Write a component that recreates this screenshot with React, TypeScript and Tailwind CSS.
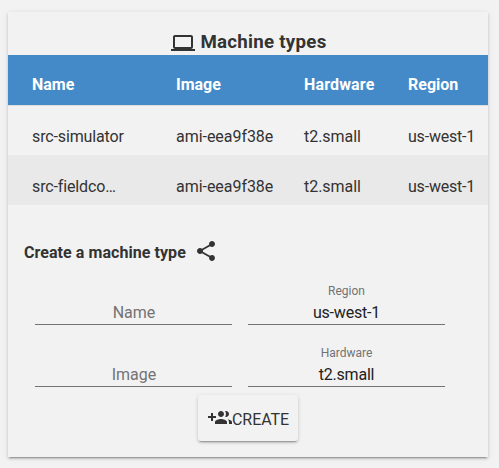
import type { ReactNode } from "react";

const ELEVATION =
  "shadow-[0_2px_2px_0_rgba(0,0,0,0.14),0_1px_5px_0_rgba(0,0,0,0.12),0_3px_1px_-2px_rgba(0,0,0,0.2)]";

const COLUMNS = "grid grid-cols-[144px_128px_104px_80px] pl-6 h-[50px] leading-6";

const machines = [
  { name: "src-simulator", image: "ami-eea9f38e", hardware: "t2.small", region: "us-west-1" },
  { name: "src-fieldco…", image: "ami-eea9f38e", hardware: "t2.small", region: "us-west-1" },
];

function Icon({ d }: { d: string }) {
  return (
    <svg viewBox="0 0 24 24" className="size-6 shrink-0 fill-[#333]" aria-hidden="true">
      <path d={d} />
    </svg>
  );
}

const LAPTOP =
  "M20 18c1.1 0 1.99-.9 1.99-2L22 6c0-1.1-.9-2-2-2H4c-1.1 0-2 .9-2 2v10c0 1.1.9 2 2 2H0v2h24v-2h-4zM4 6h16v10H4V6z";
const SHARE =
  "M18 16.08c-.76 0-1.44.3-1.96.77L8.91 12.7c.05-.23.09-.46.09-.7s-.04-.47-.09-.7l7.05-4.11c.54.5 1.25.81 2.04.81 1.66 0 3-1.34 3-3s-1.34-3-3-3-3 1.34-3 3c0 .24.04.47.09.7L8.04 9.81C7.5 9.31 6.79 9 6 9c-1.66 0-3 1.34-3 3s1.34 3 3 3c.79 0 1.5-.31 2.04-.81l7.12 4.16c-.05.21-.08.43-.08.65 0 1.61 1.31 2.92 2.92 2.92 1.61 0 2.92-1.31 2.92-2.92s-1.31-2.92-2.92-2.92z";
const GROUP_ADD =
  "M8 10H5V7H3v3H0v2h3v3h2v-3h3v-2zm10 1c1.66 0 2.99-1.34 2.99-3S19.66 5 18 5c-.32 0-.63.05-.91.14.57.81.9 1.79.9 2.86s-.34 2.04-.9 2.86c.28.09.59.14.91.14zm-5 0c1.66 0 2.99-1.34 2.99-3S14.66 5 13 5c-1.66 0-3 1.34-3 3s1.34 3 3 3zm6.62 2.16c.83.73 1.38 1.66 1.38 2.84v2h3v-2c0-1.54-2.37-2.49-4.38-2.84zM13 13c-2 0-6 1-6 3v2h12v-2c0-2-4-3-6-3z";

function Cell({ children, className = "" }: { children: ReactNode; className?: string }) {
  return <div className={`whitespace-nowrap ${className}`}>{children}</div>;
}

function Field({ label, value }: { label: string; value?: string }) {
  return (
    <div className="flex h-[62px] w-[197px] flex-col text-center">
      <div className="h-7 pt-[10px] text-xs leading-5 text-[#737373]">{value ? label : ""}</div>
      <div
        className={`h-[26px] border-b border-[#737373] pt-0.5 leading-6 ${value ? "tracking-[-0.2px] text-[#212121]" : "pl-px text-[#737373]"}`}
      >
        {value ?? label}
      </div>
    </div>
  );
}

export default function App() {
  return (
    <div className="h-[468px] bg-[#f2f2f2] px-2 pt-3 font-['Roboto',sans-serif] text-base text-[#333]">
      <main className={`h-[445px] w-[480px] bg-[#f2f2f2] ${ELEVATION}`}>
        <h1 className="flex h-[43px] items-start justify-center gap-[5px] pl-0.5 pt-[19px] text-[18.72px] font-bold leading-[22px] tracking-[0.25px]">
          <Icon d={LAPTOP} />
          <span>Machine types</span>
        </h1>
        <div className={`${COLUMNS} bg-[#448ac9] pt-[18px] font-bold text-white`}>
          <Cell>Name</Cell>
          <Cell>Image</Cell>
          <Cell className="tracking-[0.15px]">Hardware</Cell>
          <Cell>Region</Cell>
        </div>
        {machines.map((m, i) => (
          <div
            key={m.name}
            className={`${COLUMNS} pt-5 ${i % 2 ? "bg-[#e9e9e9]" : "shadow-[inset_0_1px_0_#dcdcdc]"}`}
          >
            <Cell className="tracking-[-0.13px]">{m.name}</Cell>
            <Cell className="tracking-[-0.04px]">{m.image}</Cell>
            <Cell className="tracking-[-0.05px]">{m.hardware}</Cell>
            <Cell className="tracking-[-0.2px]">{m.region}</Cell>
          </div>
        ))}
        <h2 className="flex gap-2 pl-4 pt-[34px] font-bold leading-7">
          <span className="tracking-[0.06px]">Create a machine type</span>
          <Icon d={SHARE} />
        </h2>
        <div className="grid grid-cols-[197px_197px] gap-x-4 pl-[27px] pt-1">
          <Field label="Name" />
          <Field label="Region" value="us-west-1" />
          <Field label="Image" />
          <Field label="Hardware" value="t2.small" />
        </div>
        <button
          className={`ml-[190px] flex h-[46px] w-[100px] items-start rounded-[3px] bg-[#f2f2f2] pl-[10px] pt-[11px] ${ELEVATION}`}
        >
          <Icon d={GROUP_ADD} />
          <span className="pt-0.5 leading-6 tracking-[-0.05px]">CREATE</span>
        </button>
      </main>
    </div>
  );
}
